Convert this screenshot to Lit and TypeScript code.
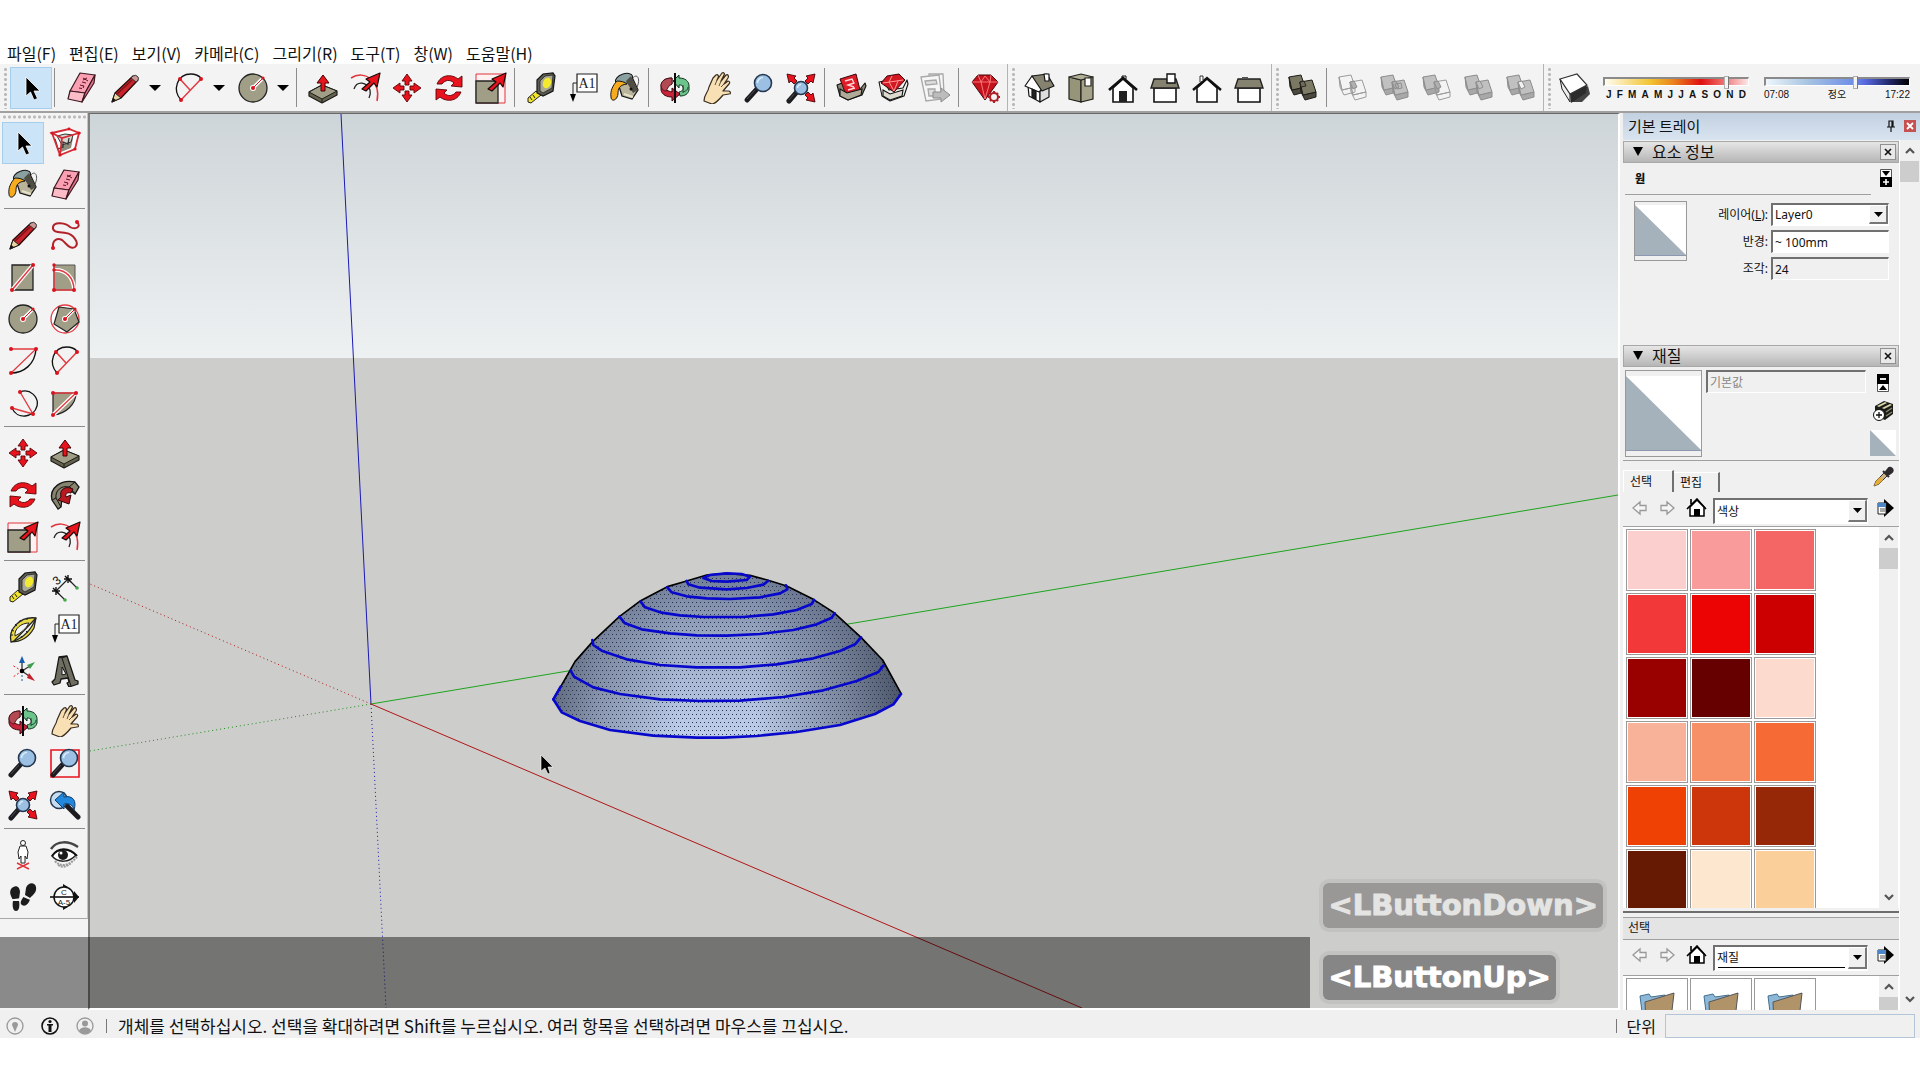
import { LitElement, html, css, svg, nothing } from "lit";
import { customElement, property } from "lit/decorators.js";
import { classMap } from "lit/directives/class-map.js";

const RED = "#e8131d";
const OLIVE = "#a09e87";

const dot = (x: number, y: number, r = 2) => svg`<circle cx=${x} cy=${y} r=${r} fill="#d8141f"/>`;

const solid = (x: number, y: number, face: string, side: string, line: string) => svg`
  <g stroke=${line} stroke-width="1" stroke-linejoin="round">
    <path fill=${side} d="M${x} ${y + 2}l3 13 13-3v5L${x + 5} ${y + 20}l-4-8z"/>
    <path fill=${face} d="M${x} ${y + 2}l12-2 4 12-13 3z"/>
  </g>`;

const solids = (mode: string) => {
  if (mode === "shell")
    return svg`${solid(2, 3, "#7a7763", "#4c4a3e", "#1d1c18")}${solid(13, 8, "#7d7a66", "#4c4a3e", "#1d1c18")}
      <path d="M13 10l4-1 2 5-5 1z" fill="#6d6a58" stroke="#1d1c18" stroke-width=".8"/>`;
  const on = ["#c0c0c0", "#a8a8a8", "#8d8d8d"];
  const off = ["none", "none", "#9c9c9c"];
  const first = mode === "intersect" ? off : on;
  const second = mode === "intersect" || mode === "subtract" ? off : on;
  const mid = mode === "split" ? "#f3f3f3" : mode === "trim" ? "#c0c0c0" : "#b0b0b0";
  return svg`${solid(2, 3, first[0], first[1], first[2])}${solid(13, 8, second[0], second[1], second[2])}
    <path d="M13 10l4-1 3 6-4 2z" fill=${mid} stroke="#8d8d8d"/>
    ${mode === "union" ? svg`<path d="M16 12l6-1 1 5-5 1z" fill="none" stroke="#8d8d8d"/>` : nothing}`;
};

const lens = (x: number, y: number, r: number, hx: number, hy: number) => {
  const k = 0.72 * r;
  return svg`
    <path d="M${x - k} ${y + k}L${hx} ${hy}" stroke="#1c1c20" stroke-width="5" stroke-linecap="round"/>
    <path d="M${x - k - 2} ${y + k + 1}L${hx} ${hy - 1}" stroke="#4a4a52" stroke-width="1"/>
    <circle cx=${x} cy=${y} r=${r} fill="#9cc0e4" stroke="#24374e" stroke-width="1.6"/>
    <path d="M${x - r + 3} ${y}a${r - 3} ${r - 3} 0 0 1 ${r - 3} ${-r + 3}" fill="none" stroke="#d9eafa" stroke-width="1.6"/>`;
};

const fatArrow = svg`<path d="M13 17l8-7-4-3 14-6-3 14-3-4-8 8z" fill=${RED} stroke="#1a0a0a" stroke-width="1.2" stroke-linejoin="round"/>`;

const icons: Record<string, unknown> = {
  select: svg`<path d="M11 5v19l4.500-4 3.500 8 3.500-1.500-3.500-7.500h6z" fill="#000" stroke="#fff" stroke-width=".8"/>`,
  eraser: svg`<g stroke="#3b1720" stroke-width="1.200" stroke-linejoin="round">
    <path fill="#fb9fb2" d="M15 1l15 2-10 18-15-2z"/><path fill="#fbbcc8" d="M5 19l15 2-3 9-14-3z"/>
    <path fill="#e0768b" d="M30 3l-1 8-12 19 3-9z"/></g>
    <path d="M14 16l3 .5M15 13l4 1-1 2M17 10l4 1M18 8l4-2M18 6l5 3" stroke="#5a1526" fill="none"/>`,
  pencil: svg`<path d="M3 30l3-9L24 4l5 4-17 18z" fill="#c8232b" stroke="#2a0a0a" stroke-width="1.300" stroke-linejoin="round"/>
    <path d="M3 30l3-9 6 5z" fill="#e8d6a0" stroke="#222"/><path d="M3 30l1-4 3 2z" fill="#111"/>
    <path d="M22 6l2-2q3-2 5 1 1 1 0 3l-2 2z" fill="#c99a96" stroke="#333"/><path d="M8 22L23 8" stroke="#7c1118" stroke-width="1.500"/>`,
  arc2: svg`<path d="M8 28C-1 18 4 2 18 2q6 0 10 4" fill="none" stroke="#111" stroke-width="1.300"/>
    <path d="M8 28L28 7M7 7l10 11" stroke="#e23b42" stroke-width="1.500"/>${dot(8, 28)}${dot(28, 7)}${dot(7, 7)}`,
  circle: svg`<circle cx="16" cy="16" r="14" fill=${OLIVE} stroke="#222" stroke-width="1.300"/>
    <path d="M16 16L25 7" stroke="#fff" stroke-width="3.500"/><circle cx="16" cy="16" r="3" fill="#fff"/>
    <path d="M16 16L25 7" stroke="#d8141f"/>${dot(16, 16, 2)}${dot(26, 6, 1.6)}`,
  pushpull: svg`<path d="M2 20l13-7 15 6v4L15 31 2 24z" fill="#65634f" stroke="#1c1c17" stroke-width="1.200" stroke-linejoin="round"/>
    <path d="M2 20l13-7 15 6-15 8z" fill=${OLIVE} stroke="#1c1c17"/><path d="M15 27v4" stroke="#1c1c17"/>
    <path d="M14 19v-8h-4l6-8 6 8h-4v8z" fill=${RED} stroke="#400" stroke-linejoin="round"/>`,
  offset: svg`<path d="M2 6C16-3 32 10 28 29" fill="none" stroke="#e0343c" stroke-width="1.500"/>
    <path d="M5 17C8 8 18 10 21 18q1 4-1 8" fill="none" stroke="#222" stroke-width="1.300"/>${fatArrow}`,
  move: svg`<g fill=${RED} stroke="#5a0508" stroke-width=".9" stroke-linejoin="round">
    <path d="M16 2l5 7h-3v4h-4V9h-3zM16 30l5-7h-3v-4h-4v4h-3zM2 16l7-5v3h4v4H9v3zM30 16l-7-5v3h-4v4h4v3z"/></g>`,
  rotate: svg`<g fill=${RED} stroke="#5a0508" stroke-linejoin="round" stroke-width=".9">
    <path d="M4 12C8 2 19 2 25 7l4-3v11l-11-1 3-3c-4-4-9-3-12 1z"/>
    <path d="M28 20c-4 10-15 10-21 5l-4 3V17l11 1-3 3c4 4 9 3 12-1z"/></g>`,
  scale: svg`<path d="M1 2h29v29H1z" fill="#fdf1f1" stroke="#e0343c"/><path d="M1 9h22v22H1z" fill=${OLIVE} stroke="#222" stroke-width="1.300"/>${fatArrow}`,
  tape: svg`<path d="M11 19L3 26v4l3 1 10-8z" fill="#f1e22a" stroke="#222"/><path d="M5 25l2 3M8 23l2 3" stroke="#222"/>
    <path d="M12 8l6-6 10-1 2 3-2 15-10 5-6-3z" fill="#5d5c53" stroke="#151515" stroke-width="1.200"/>
    <path d="M15 9l5-5 8-1-1 13-9 5-3-2z" fill="#aaa897" stroke="#222" stroke-width=".8"/>
    <ellipse cx="22" cy="11" rx="4" ry="5.500" fill="#f4ea2d" transform="rotate(20 22 11)"/>`,
  text: svg`<path d="M10 2h20v18H10z" fill="#fff" stroke="#222" stroke-width="1.200"/>
    <text x="20" y="16" font-family="Liberation Serif, serif" font-size="14" text-anchor="middle" fill="#222">A1</text>
    <path d="M10 11H6v12" fill="none" stroke="#222"/><path d="M3 22h6l-3 8z" fill="#000"/>`,
  paint: svg`<path d="M23 7c5-7 9 0 5 8" fill="none" stroke="#555"/>
    <path d="M8 8l14-5 7 15-6 9-10-3z" fill="#b9b49b" stroke="#161616" stroke-width="1.300"/>
    <ellipse cx="15" cy="7" rx="9" ry="5" transform="rotate(-20 15 7)" fill="#8ba0a0" stroke="#161616"/>
    <path d="M22 4l7 14-5 3-7-12z" fill="#4f4d44"/><path d="M15 22l9 3" stroke="#e5e0c8" stroke-width="2" fill="none"/>
    <circle cx="22" cy="17" r="1.500" fill="#111"/>
    <path d="M8 9c4 0 8 1 10 3-8 1-9 5-9 10-1 7-7 8-7 3C1 19 4 13 8 9z" fill="#f6ab1e" stroke="#161616"/>`,
  orbit: svg`<path d="M14 9l6-6v3c6 0 10 3 10 8v4c-1 4-4 6-9 6l-1-4c4-1 5-3 4-5s-2-2-4-2v3z" fill="#6cc48c" stroke="#12311f" stroke-linejoin="round"/>
    <path d="M24 13v8M29 15c0 3-2 4-5 5" stroke="#12311f" fill="none" stroke-width=".8"/>
    <path d="M13 6C6 6 2 9 2 14v4c1 5 6 7 11 7v4l8-7-8-6v4c-4-1-7-2-7-4s3-4 7-4z" fill="#c9253a" stroke="#3c0810" stroke-linejoin="round"/>
    <path d="M13 6C6 6 2 9 2 14c1 4 3 5 5 5l3-5 3-2z" fill="#b14a52" stroke="#3c0810" stroke-width=".8"/>
    <path d="M16 1v30" stroke="#0c0c0c" stroke-width="2"/>`,
  pan: svg`<path d="M3 29c0-7 4-8 5-14L12 6l3-3c2-1 3 1 2 3l-1 2 5-7c2-1 3 1 2 2l-3 6 5-6c2-1 3 1 2 3l-4 6 4-3c2 0 2 2 1 3l-6 7h6c2 1 2 3 0 3l-6 1c-5 6-8 9-11 9z" fill="#f8dfb4" stroke="#372c1e" stroke-width="1.200" stroke-linejoin="round"/>
    <path d="M16 8l-2 5M20 9l-2 5M23 12l-3 3" stroke="#372c1e" stroke-width=".8"/>`,
  zoom: svg`${lens(20, 11, 8.5, 4, 28)}`,
  extents: svg`${lens(16, 16, 6.5, 4, 29)}<g fill=${RED} stroke="#44060a" stroke-width=".9">
    <path d="M2 2l9 2-2 2 3 3-3 3-3-3-2 2zM30 2l-9 2 2 2-3 3 3 3 3-3 2 2zM30 30l-9-2 2-2-3-3 3-3 3 3 2-2z"/></g>`,
  zoomwin: svg`<path d="M2 3h28v27H2z" fill="none" stroke=${RED} stroke-width="1.600"/>${lens(20, 11, 8.5, 4, 28)}`,
  previous: svg`<path d="M17 16l12 12" stroke="#1c1c20" stroke-width="5" stroke-linecap="round"/>
    <circle cx="10" cy="11" r="8.500" fill="#c5dcf0" stroke="#24374e" stroke-width="1.400"/>
    <path d="M6 11l9-8v5c9-2 13 4 10 13-1-5-5-7-10-6v5z" fill="#2188dd" stroke="#0b3c70"/>`,
  warehouse: svg`<path d="M2 13l5-2 4 7 15-2 4-5 1 3-4 9-14 5-8-4z" fill="#8b8778" stroke="#121212" stroke-width="1.100" stroke-linejoin="round"/>
    <path d="M5 7l16-5 4 16-14 5z" fill="#df1b27" stroke="#3b060a"/>
    <path d="M10 9l7-2 2 4-6 2 6 2M13 18l7-2" stroke="#ffd7d7" stroke-width="1.400" fill="none"/>
    <path d="M5 17l7 4 15-4-1 6-13 5-8-4z" fill="#b0ab99" stroke="#121212" stroke-width="1.100"/>`,
  extension: svg`<path d="M2 10l5-1 5 9 14-2 4-8 1 4-4 12-14 5-8-5z" fill="#f0f0ec" stroke="#121212" stroke-width="1.100" stroke-linejoin="round"/>
    <path d="M10 4l12-2 6 6-11 12L4 11z" fill="#d31822" stroke="#3b060a"/>
    <path d="M6 11l20-3M12 10l5 9 4-10M12 10l3-6" stroke="#ff9a9a" fill="none"/>
    <path d="M6 18l7 4 13-4-1 6-12 4-7-4z" fill="#dddad0" stroke="#121212" stroke-width="1.100"/>`,
  layout: svg`<g fill="#f6f6f6" stroke="#a8a8a8" stroke-width="1.300"><path d="M10 2h14l1 20H10z"/><path d="M2 5l18-2 3 24-16 2z"/>
    <path d="M6 9l11-1 1 4-11 1zM9 17h7v7h-6z" fill="#ddd"/></g>
    <path d="M14 20h8v-4l9 7-9 7v-4h-8z" fill="#bcbcbc" stroke="#8b8b8b"/>`,
  ruby: svg`<path d="M3 10l6-7h13l7 7-13 18z" fill="#c5131d" stroke="#480509"/>
    <path d="M3 10h26M9 3l3 7 4 17 5-17 1-7M12 10l4-6 5 6" stroke="#ff8082" fill="none" stroke-width=".9"/>
    <circle cx="25" cy="25" r="4" fill="#f3f3f3" stroke="#b02028" stroke-width="2"/>
    <path d="M25 19v2M25 29v2M19 25h2M29 25h2M21 21l1 1M28 28l1 1M29 21l-1 1M21 29l1-1" stroke="#b02028" stroke-width="2"/>`,
  iso: svg`<g stroke="#151515" stroke-width="1.200" stroke-linejoin="round"><path d="M5 14l12 4v12L6 24z" fill="#fff"/><path d="M17 18l9-5v12l-9 5z" fill="#ddd"/>
    <path d="M2 14l7-10 4 2 6 11-3 3z" fill="#fff"/><path d="M9 4l15-2 7 12-12 5z" fill="#85836f"/><path d="M21 2h5v7h-4z" fill="#fff"/><path d="M9 17l4 2v8l-4-2z" fill="#222"/></g>`,
  top: svg`<g stroke="#22221d" stroke-width="1.200"><path d="M4 5l12 3v22L4 27z" fill="#969479"/><path d="M16 8l12-3v22l-12 3z" fill="#a5a38a"/>
    <path d="M4 5l12-3 12 3-12 3z" fill="#b1af98"/><path d="M20 6h6v8h-6z" fill="#fff"/></g>`,
  front: svg`<path d="M6 16L16 7l10 9v14H6z" fill="#fff" stroke="#111" stroke-width="1.600"/><path d="M2 18L16 6l14 12" fill="none" stroke="#111" stroke-width="2.600"/>
    <path d="M12 19h8v11h-8z" fill="#222"/><path d="M15 6V4h4v3" fill="none" stroke="#111"/>`,
  right: svg`<path d="M5 16h22v14H5z" fill="#fff" stroke="#111" stroke-width="1.600"/><path d="M5 7h22l3 9H2z" fill="#85836f" stroke="#222" stroke-width="1.400"/>
    <path d="M18 2h8v9h-8z" fill="#fff" stroke="#111" stroke-width="1.400"/>`,
  back: svg`<path d="M6 16L16 7l10 9v14H6z" fill="#fff" stroke="#111" stroke-width="1.600"/><path d="M2 18L16 6l14 12" fill="none" stroke="#111" stroke-width="2.400"/>
    <path d="M9 10V4h3v4" fill="#fff" stroke="#333"/>`,
  left: svg`<path d="M5 16h22v14H5z" fill="#fff" stroke="#111" stroke-width="1.600"/><path d="M5 7h22l3 9H2z" fill="#85836f" stroke="#222" stroke-width="1.400"/>
    <path d="M9 5h6v2H9z" fill="#555"/>`,
  shell: solids("shell"),
  intersect: solids("intersect"),
  union: solids("union"),
  subtract: solids("subtract"),
  trim: solids("trim"),
  split: solids("split"),
  shadow: svg`<path d="M15 22l14-8 2 8-8 8H12z" fill="#444"/><path d="M1 7l10 14v9L3 17z" fill="#eee" stroke="#222"/>
    <path d="M11 21l17-8-1 8-15 10z" fill="#2c2c2c"/><path d="M1 7l17-5 10 11-17 9z" fill="#fff" stroke="#333" stroke-width="1.200"/>`,
  component: svg`<path d="M3 6l17-4 10 4-4 17-15 6z" fill="#fff"/><path d="M12 14l12-3-2 10-10 4z" fill="#8d8b7a"/><path d="M8 9l8-2 8 1-2 7-9 3z" fill="#d6d6d0" stroke="#333"/>
    <path d="M6 12l3 10 5-2v-5l5 2 1-6" fill="none" stroke="#333" stroke-width="1.300"/>
    <g fill="none" stroke="#d42d38" stroke-width="1.800"><path d="M3 6l17-4 10 4-17 5zM3 6l8 22 15-6 4-16M13 11l-2 17"/></g>
    ${dot(3, 6, 1.6)}${dot(20, 2, 1.4)}${dot(30, 6, 1.6)}${dot(11, 28, 1.6)}${dot(26, 22, 1.6)}`,
  freehand: svg`<path d="M4 29c-1-9 5-10 9-8 5 4 8 10 13 7 5-4-2-13-9-14-6-1-14 0-13-6S17 4 21 8c5 3 12 0 7-5" fill="none" stroke="#b2222b" stroke-width="2"/>${dot(4, 29)}${dot(28, 3)}`,
  rect: svg`<path d="M5 4h21v25H5z" fill=${OLIVE} stroke="#222" stroke-width="1.300"/><path d="M5 29L26 4" stroke="#fff" stroke-width="4"/>
    <path d="M5 29L26 4" stroke="#e23b42" stroke-width="1.500"/>${dot(5, 29)}${dot(26, 4)}`,
  rotrect: svg`<path d="M5 4h21v25H5z" fill=${OLIVE} stroke="#555"/><path d="M5 9c12-1 20 8 20 20" fill="none" stroke="#fff" stroke-width="4"/>
    <path d="M5 4v25h20M5 9c12-1 20 8 20 20" fill="none" stroke="#e23b42" stroke-width="1.500"/>${dot(5, 4, 1.7)}${dot(5, 9, 1.7)}${dot(5, 29)}${dot(25, 29)}`,
  polygon: svg`<circle cx="16" cy="16" r="14" fill="#fff" stroke="#e23b42" stroke-width="1.300"/>
    <path d="M10 4l15 2 5 13-12 10-13-8z" fill=${OLIVE} stroke="#222" stroke-width="1.200"/><path d="M16 16l9-9" stroke="#fff" stroke-width="3"/>
    <circle cx="16" cy="16" r="3" fill="#fff"/><path d="M16 16l9-9" stroke="#d8141f"/>${dot(16, 16, 2)}${dot(26, 6, 1.6)}`,
  arc: svg`<path d="M4 28C17 28 28 19 29 4" fill="none" stroke="#111" stroke-width="1.400"/><path d="M4 4h25L4 28" fill="none" stroke="#e23b42" stroke-width="1.300"/>${dot(4, 4)}${dot(29, 4)}${dot(4, 28)}`,
  arc3: svg`<path d="M13 5c10-4 19 5 17 14-3 12-20 14-25 2" fill="none" stroke="#111" stroke-width="1.300"/>
    <path d="M13 5l13 22L5 21" fill="none" stroke="#e23b42" stroke-width="1.400"/>${dot(13, 5)}${dot(5, 21)}${dot(26, 27)}`,
  pie: svg`<path d="M4 6h23c0 11-10 21-23 22z" fill=${OLIVE} stroke="#222" stroke-width="1.200"/><path d="M27 6L4 28" stroke="#fff" stroke-width="4"/>
    <path d="M4 6h23L4 28" fill="none" stroke="#e23b42" stroke-width="1.400"/>${dot(4, 6)}${dot(27, 6)}${dot(4, 28)}`,
  follow: svg`<path d="M9 30l-6-9C0 9 12 0 26 3l4 5-4 7-5-4c-7-2-9 2-8 8l-1 9z" fill="#86846f" stroke="#151515" stroke-width="1.300"/>
    <path d="M3 21l4-2 5 9M7 19C6 12 12 6 20 8l6-5M21 8l5 7" fill="none" stroke="#151515"/>
    <path d="M12 18c-2-7 4-12 12-8l-2 4c-4-1-6 1-5 4l5-2-2 9-11-4z" fill="#b81820" stroke="#32060a"/>`,
  dimension: svg`<path d="M7 20L19 8M7 20l9 9M19 8l9 9" stroke="#222" stroke-width="1.200"/><path d="M3 20h8M7 16v8M15 8h8M19 4v8M4 17l6 6M16 5l6 6" stroke="#111" stroke-width="1.400"/>
    <text x="5" y="13" font-family="Liberation Sans, sans-serif" font-size="12" transform="rotate(-40 9 10)" fill="#111">3</text>
    <circle cx="16" cy="29" r="1.800" fill="#45a84a"/><circle cx="28" cy="17" r="1.800" fill="#45a84a"/>`,
  protractor: svg`<path d="M4 29C1 16 13 3 29 5L7 28z" fill="#e9da45" stroke="#222" stroke-width="1.300" stroke-linejoin="round"/>
    <path d="M4 29l3-1C18 24 25 15 29 5l-2 10C22 24 14 29 4 29z" fill="#e9da45" stroke="#222" stroke-width="1.200"/>
    <path d="M8 23c-1-7 6-13 14-13-3 6-8 10-14 13z" fill="#f3f3f3" stroke="#222"/><path d="M4 22l2 0M4 17l3 1M8 11l2 2M13 7l1 2M20 5v2M15 25l-1-2M21 20l-2-2" stroke="#222"/>`,
  axes: svg`<path d="M15 16L5 10M15 16L6 22" stroke="#d22" stroke-dasharray="2 2"/><path d="M15 16v12" stroke="#2255a0" stroke-dasharray="2 2"/>
    <path d="M15 16V7M15 16l8-5M15 16l7 5" stroke="#333" stroke-width="1.300"/><path d="M12 8l3-7 3 7z" fill="#1a5fae"/><path d="M20 10l8-3-5 7z" fill="#3f9d4d"/>
    <path d="M22 18l6 8-8-3z" fill="#c2202a"/><circle cx="15" cy="16" r="2.300" fill="#000"/>`,
  text3d: svg`<path d="M10 2l8-1 8 24 3 1v3l-9 3-2-4 2-1-1-4-7 1-1 4-6 2-2-3 3-3z" fill="#6f6e60" stroke="#161616" stroke-width="1.300" stroke-linejoin="round"/>
    <path d="M13 12l4 7-4 1z" fill="#f3f3f3" stroke="#161616"/><path d="M10 2l3 1 9 28M13 3l5-2" stroke="#161616" fill="none"/>`,
  position: svg`<circle cx="16" cy="4" r="2.500" fill="#fff" stroke="#222"/><path d="M13 7h6l2 6-1 7-2-3v7h-4v-7l-2 3-1-7z" fill="#fff" stroke="#222"/>
    <path d="M10 30l12-6M10 24l12 6" stroke="#e0343c" stroke-width="1.500"/>`,
  look: svg`<path d="M2 10C8 1 20 2 29 8" stroke="#444" stroke-width="2.500" fill="none"/><path d="M3 17c6-8 16-8 24-1-7 8-18 8-24 1z" fill="#fff" stroke="#222" stroke-width="1.500"/>
    <path d="M3 17c6-9 17-9 25 0" stroke="#111" stroke-width="2" fill="none"/>
    <circle cx="14" cy="16" r="5" fill="#1b1b1b"/><circle cx="12" cy="14" r="1.500" fill="#fff"/>
    <path d="M6 22c5 6 13 6 22-4M9 26c5 3 9 2 14-3" fill="none" stroke="#999" stroke-width="2" stroke-dasharray="2 1"/>`,
  walk: svg`<g fill="#1c1c1c"><path d="M4 8c4-5 9-3 9 3l-1 7-6 1c-2-4-4-7-2-11zM6 20h6c1 5 0 10-3 10s-4-5-3-10z"/><path d="M19 7c2-6 9-6 10-1s-3 8-6 11l-5-3zM17 15l6 3c-1 5-5 8-8 6s0-6 2-9z"/></g>
    <path d="M5 19l8-1M16 15l7 3" stroke="#f3f3f3" stroke-width="1.600"/>`,
  section: svg`<circle cx="15" cy="16" r="10" fill="#fff" stroke="#111" stroke-width="1.500"/><path d="M14 3l5 3h-5zM14 29l5-3h-5zM25 10l5 6-5 6z" fill="#111"/><path d="M1 16h29" stroke="#111" stroke-width="1.600"/>
    <g font-family="Liberation Sans, sans-serif" font-size="8" text-anchor="middle" fill="#222"><text x="15" y="14">C</text><text x="15" y="24">A-5</text></g>`,
  home: svg`<path d="M4 9l7-7 7 7v9H4z" fill="#fff" stroke="#000" stroke-width="1.500"/><path d="M1 11L11 1l9 10M5 6V1" stroke="#000" stroke-width="1.600" fill="none"/><path d="M8 11h6v7H8z" fill="#000"/>`,
};

const icon = (name: string) => html`<svg class="ico" viewBox="0 0 32 32" fill="none" aria-hidden="true">${icons[name]}</svg>`;

const toolStyles = css`
  button { border: 0; padding: 0; margin: 0; background: none; font: inherit; color: inherit; }
  .tool { width: 42px; height: 42px; flex: none; display: grid; place-items: center; border: 1px solid transparent; }
  .tool.active { background: #cce4f7; border-color: #a5cdec; }
  .ico { width: 32px; height: 32px; display: block; }
`;

const tool = (name: string, label: string, active = false) =>
  html`<button class=${classMap({ tool: true, active })} aria-label=${label} title=${label}>${icon(name)}</button>`;

@customElement("top-toolbar")
class TopToolbar extends LitElement {
  static styles = [toolStyles, css`
    :host { display: flex; height: 49px; background: #f3f3f3; border-bottom: 2px solid #a0a0a0; align-items: center; box-sizing: border-box; font-family: "Liberation Sans", "Noto Sans CJK KR", sans-serif; }
    .group { display: flex; align-items: center; align-self: stretch; border-right: 1px solid #b4b4b4; padding-right: 1px; }
    .group.last { border: 0; flex: 1; }
    .grip { width: 10px; height: 42px; flex: none; background: radial-gradient(circle, #b8b8b8 1px, transparent 2px) 4px 0 / 3px 5px repeat-y; }
    .sep { width: 1px; height: 39px; margin: 0 5px 0 2px; background: #8c8c8c; flex: none; }
    .split { display: flex; align-items: center; padding: 0 2px; }
    .drop { width: 18px; height: 42px; display: grid; place-items: center; }
    .drop svg { width: 12px; height: 6px; }
    .slider { width: 146px; margin: 1px 0 0 7px; color: #111; font-size: 10px; font-weight: 700; line-height: 14px; }
    .slider + .slider { margin-left: 15px; }
    .ticks { display: flex; justify-content: space-between; padding: 0 3px; }
    .times { padding: 0; font-weight: 400; }
    input { appearance: none; display: block; width: 100%; height: 14px; margin: 0; background: none; }
    input::-webkit-slider-runnable-track { height: 9px; border: 1px solid #fff; border-top: 2px solid #8a8a8a; border-left: 2px solid #8a8a8a; background: linear-gradient(90deg, #fffdf0, #f2c230 32%, #e9811e 48%, #e01010 67%, #ee6a6a 82%, #fde6e6); }
    .day::-webkit-slider-runnable-track { background: linear-gradient(90deg, #eef6fc, #a9c6e2 28%, #7190e6 60%, #5566dd 70%, #23286a 86%, #000); }
    input::-webkit-slider-thumb { appearance: none; width: 5px; height: 13px; margin-top: -3px; background: #f4f4f4; border: 1px solid #b0b0b0; border-right-color: #777; box-sizing: border-box; }
  `];
  render() {
    const sep = html`<span class="sep"></span>`;
    const grip = html`<span class="grip"></span>`;
    const split = (n: string, l: string) => html`<span class="split">${tool(n, l)}<button class="drop" aria-label="${l} 옵션"><svg viewBox="0 0 12 6"><path d="M0 0h12L6 6z"/></svg></button></span>`;
    return html`
      <div class="group">${grip}${tool("select", "선택", true)}${sep}${tool("eraser", "지우기")}
        ${split("pencil", "선")}${split("arc2", "호")}${split("circle", "원")}${sep}
        ${tool("pushpull", "밀기/끌기")}${tool("offset", "오프셋")}${tool("move", "이동")}${tool("rotate", "회전")}${tool("scale", "배율")}${sep}
        ${tool("tape", "줄자")}${tool("text", "텍스트")}${tool("paint", "페인트통")}${sep}
        ${tool("orbit", "궤도")}${tool("pan", "이동 보기")}${tool("zoom", "확대/축소")}${tool("extents", "범위 확대/축소")}${sep}
        ${tool("warehouse", "3D Warehouse")}${tool("extension", "Extension Warehouse")}${tool("layout", "LayOut")}${sep}${tool("ruby", "확장 관리자")}</div>
      <div class="group">${grip}${tool("iso", "등각")}${tool("top", "상단")}${tool("front", "전면")}${tool("right", "오른쪽")}${tool("back", "후면")}${tool("left", "왼쪽")}</div>
      <div class="group">${grip}${tool("shell", "외부 셸")}${sep}${tool("intersect", "교차")}${tool("union", "결합")}${tool("subtract", "빼기")}${tool("trim", "트리밍")}${tool("split", "분할")}</div>
      <div class="group last">${grip}${tool("shadow", "그림자")}
        <div class="slider"><input type="range" min="0" max="100" value="86" aria-label="날짜">
          <div class="ticks">${[..."JFMAMJJASOND"].map((m) => html`<span>${m}</span>`)}</div></div>
        <div class="slider"><input class="day" type="range" min="0" max="100" value="63" aria-label="시간">
          <div class="ticks times"><span>07:08</span><span>정오</span><span>17:22</span></div></div>
      </div>`;
  }
}

@customElement("side-toolbar")
class SideToolbar extends LitElement {
  static styles = [toolStyles, css`
    :host { display: block; width: 88px; flex: none; background: #f3f3f3; }
    .palette { border-bottom: 1px solid #a8a8a8; border-right: 1px solid #c4c4c4; padding: 0 1px 0 2px; }
    .grip { height: 9px; background: radial-gradient(circle, #b8b8b8 1px, transparent 2px) 0 2px / 5px 4px repeat-x; }
    .grid { display: grid; grid-template-columns: 42px 42px; }
    .sep { height: 1px; background: #8c8c8c; margin: 2px 1px 5px 2px; }
  `];
  render() {
    const groups = [
      ["select", "component", "paint", "eraser"],
      ["pencil", "freehand", "rect", "rotrect", "circle", "polygon", "arc", "arc2", "arc3", "pie"],
      ["move", "pushpull", "rotate", "follow", "scale", "offset"],
      ["tape", "dimension", "protractor", "text", "axes", "text3d"],
      ["orbit", "pan", "zoom", "zoomwin", "extents", "previous"],
      ["position", "look", "walk", "section"],
    ];
    return html`<div class="palette"><div class="grip"></div>
      ${groups.map((g, i) => html`${i ? html`<div class="sep"></div>` : nothing}<div class="grid">${g.map((n) => tool(n, n, n === "select"))}</div>`)}</div>`;
  }
}

const RINGS = [
  "122,362 132,380 190,412 270,432 390,448 510,453 630,452 760,441 880,421 980,393 1045,366 1060,347",
  "187,270 190,285 215,302 290,328 390,345 500,352 630,352 740,343 850,325 930,303 975,283 993,262",
  "268,200 285,220 335,238 420,250 500,256 590,257 690,252 790,240 860,223 905,203 914,190",
  "332,155 345,172 395,188 450,196 520,201 640,201 730,193 800,180 845,162 852,150",
  "412,112 425,127 470,139 530,145 600,147 690,142 750,130 772,118 768,106",
  "470,93 475,103 510,113 590,118 650,114 700,104 714,93",
  "520,84 540,75 590,70 635,72 660,80 650,90 590,95 545,93 520,84",
];
const OUTLINE = "70,448 118,365 135,335 188,275 268,200 332,152 412,110 470,93 530,75 590,70 660,76 712,90 770,108 850,148 912,188 993,262 1058,330 1113,430";
const BASE = "1113,432 1090,463 1035,492 930,525 800,546 680,558 580,563 500,563 370,557 240,540 150,513 95,487 70,448";

@customElement("model-view")
class ModelView extends LitElement {
  static styles = css`
    :host { display: block; position: relative; flex: 1; min-width: 0; overflow: hidden; border: 1px solid #696969; border-width: 1px 0 0 1px; border-left: 2px solid #808080; border-right: 2px solid #fff; border-bottom: 2px solid #fff; background: #cdcdcb; }
    svg { display: block; width: 100%; height: 100%; }
    .keys { position: absolute; right: 15px; bottom: 8px; display: flex; flex-direction: column; align-items: flex-start; gap: 27px; }
    .key { font: 700 29px/45px "DejaVu Sans", sans-serif; -webkit-text-stroke: 1px currentColor; padding: 0 5px; border-radius: 6px; background: #868686; color: #fff; box-shadow: 0 0 0 4px rgba(0, 0, 0, 0.05); white-space: nowrap; }
    .key.faded { background: #999897; color: #e4e4e3; }
  `;
  render() {
    return html`
      <svg viewBox="90 114 1528 894" preserveAspectRatio="xMidYMid slice" role="img" aria-label="모델">
        <defs>
          <linearGradient id="sky" x2="0" y2="1"><stop stop-color="#ced5d8"/><stop offset="1" stop-color="#eef1f2"/></linearGradient>
          <linearGradient id="lit" x2="0" y2="1"><stop stop-color="#707d98"/><stop offset=".4" stop-color="#9aa9c4"/><stop offset="1" stop-color="#bfd0ec"/></linearGradient>
          <linearGradient id="edge"><stop stop-color="#2c3342" stop-opacity=".6"/><stop offset=".13" stop-color="#2c3342" stop-opacity=".32"/><stop offset=".36" stop-color="#2c3342" stop-opacity="0"/><stop offset=".58" stop-color="#2c3342" stop-opacity="0"/><stop offset=".84" stop-color="#2c3342" stop-opacity=".42"/><stop offset="1" stop-color="#2c3342" stop-opacity=".75"/></linearGradient>
          <pattern id="dots" width="12" height="24" patternUnits="userSpaceOnUse"><path d="M0 0h3v3H0zM6 12h3v3H6z" fill="#27304f"/></pattern>
        </defs>
        <path d="M90 114h1528v244H90z" fill="url(#sky)"/>
        <g stroke-width="1" fill="none">
          <path d="M341 114l30 590" stroke="#1a1ab4"/>
          <path d="M371 704l15 304" stroke="#1a1ab4" stroke-dasharray="1 3"/>
          <path d="M371 704l1247-209" stroke="#1da51d"/>
          <path d="M371 704L90 751" stroke="#1d8f1d" stroke-dasharray="1 3"/>
          <path d="M371 704l711 304" stroke="#b01616"/>
          <path d="M371 704L90 584" stroke="#b01616" stroke-dasharray="1 3"/>
        </g>
        <g transform="translate(530 550) scale(.33333)" stroke-linejoin="round" stroke-linecap="round" fill="none">
          <polygon points="${OUTLINE} ${BASE}" fill="url(#lit)"/>
          <polygon points="${OUTLINE} ${BASE}" fill="url(#edge)"/>
          <polygon points="${OUTLINE} ${BASE}" fill="url(#dots)"/>
          <polyline points=${OUTLINE} stroke="#000" stroke-width="5"/>
          <g stroke="#0808cc" stroke-width="8">
            <polyline points=${BASE}/>
            ${RINGS.map((p) => svg`<polyline points=${p}/>`)}
            <polyline points="70,448 92,410"/>
          </g>
        </g>
        <path d="M541 755v16l4-3 3 6 2-1-2-6h5z" fill="#000" stroke="#fff" stroke-width=".6"/>
      </svg>
      <div class="keys"><div class="key faded">&lt;LButtonDown&gt;</div><div class="key">&lt;LButtonUp&gt;</div></div>`;
  }
}

const SWATCHES = ["#fbcfce", "#f99b9b", "#f46665", "#f23838", "#ec0404", "#cc0000", "#990000", "#660000", "#fcdacd", "#f8b299", "#f79067", "#f66a35", "#f04104", "#cd350b", "#962807", "#661a04", "#fde7cf", "#fbcf9a"];

@customElement("side-tray")
class SideTray extends LitElement {
  static styles = css`
    :host { width: 297px; margin-left: 3px; flex: none; display: flex; flex-direction: column; min-height: 0; background: #f0f0f0; color: #111; font: 12px/16px "Noto Sans", "Noto Sans CJK KR", sans-serif; }
    button { border: 0; padding: 0; margin: 0; background: none; font: inherit; color: inherit; }
    svg { display: block; flex: none; }
    .title { display: flex; align-items: center; height: 27px; box-sizing: border-box; flex: none; padding: 0 4px 2px 5px; background: linear-gradient(#c3d0e0, #d8e4f0); font: 15px/20px "Noto Sans CJK KR", sans-serif; }
    .title span { flex: 1; }
    .title button { display: grid; place-items: center; }
    .title .close { width: 12px; height: 12px; margin-left: 9px; background: #c75050; }
    .body { flex: 1; min-height: 0; display: flex; padding-right: 1px; }
    .panels { flex: 1; min-width: 0; display: flex; flex-direction: column; padding-top: 1px; border-right: 1px solid #fff; }
    .head { display: flex; align-items: center; height: 22px; flex: none; box-sizing: border-box; border: 1px solid #a8a8a8; background: linear-gradient(#e6e6e6, #b6b6b6); padding: 0 2px 2px 9px; font: 16px/18px "Noto Sans CJK KR", sans-serif; }
    .head span { flex: 1; margin-left: 9px; }
    .x { width: 16px; height: 16px; margin-top: 2px; box-sizing: border-box; border: 1px solid #909090; background: #e8e8e8; display: grid; place-items: center; }
    .scroll { width: 19px; flex: none; display: flex; flex-direction: column; align-items: center; background: #f0f0f0; }
    .scroll button { width: 19px; height: 21px; display: grid; place-items: center; flex: none; }
    .thumb { width: 19px; height: 21px; background: #cdcdcd; margin-bottom: auto; flex: none; }
    .info { height: 182px; flex: none; box-sizing: border-box; padding: 6px 7px 0 2px; }
    .kind { display: flex; justify-content: space-between; padding: 0 0 0 10px; height: 25px; font-weight: 700; align-items: flex-start; }
    .kind b { font-size: 11px; line-height: 20px; }
    .rule { height: 1px; background: #a0a0a0; flex: none; }
    .info .rule { margin-right: 21px; }
    .detail { display: flex; justify-content: space-between; padding: 6px 3px 0 9px; align-items: flex-start; }
    .form { display: grid; grid-template-columns: auto 118px; gap: 4px 3px; align-items: center; text-align: right; padding-top: 2px; }
    .chip { box-sizing: border-box; border: 1px solid #999; background: #f0f0f0; padding: 3px 0 4px; }
    .big { padding: 5px 0; }
    .chip svg { border-bottom: 1px solid #8d98b0; box-sizing: border-box; }
    .field { width: 100%; height: 23px; box-sizing: border-box; border: 1px solid #fff; border-top: 2px solid #707070; border-left: 2px solid #707070; background: #fff; font: inherit; color: #111; padding: 0 2px; margin: 0; border-radius: 0; appearance: none; min-width: 0; }
    .field.flat { background: #f0f0f0; }
    .field::placeholder { color: #888; }
    .pick { display: grid; grid-template-columns: 1fr 20px; align-items: center; flex: 1; min-width: 0; }
    .pick select { grid-area: 1 / 1 / 2 / 3; }
    .pick i { grid-area: 1 / 2; pointer-events: none; height: 19px; margin-right: 1px; border: 1px solid #fff; border-right: 2px solid #777; border-bottom: 2px solid #777; background: #f0f0f0; box-sizing: border-box; display: grid; place-items: center; }
    .mat { display: flex; height: 93px; box-sizing: border-box; padding: 3px 3px 0 2px; flex: none; align-items: flex-start; }
    .mat .field { width: 160px; margin-left: 4px; }
    .side { margin-left: auto; display: flex; flex-direction: column; align-items: center; gap: 8px; padding-top: 4px; }
    .tabs { display: flex; height: 35px; flex: none; align-items: flex-end; box-sizing: border-box; padding: 0 5px 4px 0; }
    .tab { height: 20px; width: 46px; padding-right: 10px; border-top: 1px solid #fff; border-right: 2px solid #707070; box-sizing: border-box; line-height: 18px; }
    .tab.on { height: 22px; width: 51px; padding-right: 14px; border-left: 1px solid #fff; }
    .drop { margin-left: auto; align-self: flex-start; padding-top: 5px; }
    .nav { display: flex; align-items: center; height: 31px; flex: none; box-sizing: border-box; padding: 0 5px 6px 9px; gap: 11px; border-bottom: 1px solid #a0a0a0; }
    .nav .pick { margin: 6px -2px 0 -5px; }
    .nav .field { height: 26px; }
    .nav .pick i { height: 22px; }
    .list { display: flex; background: #fff; min-height: 0; overflow: hidden; }
    .list.colors { flex: 1 1 0; }
    .list.folders { height: 34px; flex: none; }
    .cells { flex: 1; display: grid; grid-template-columns: repeat(3, 62px); grid-auto-rows: 62px; gap: 2px; padding: 2px 0 0 3px; }
    .cell { border: 1px solid #999; background: #fff; padding: 1px; display: grid; }
    .cell span { display: block; }
    .cell svg { margin: 10px auto; }
    .list .scroll { margin-right: 1px; }
    .strip { margin-top: 3px; border-top: 2px solid #6e6e6e; padding-top: 4px; flex: none; }
    .strip p { margin: 0; height: 23px; box-sizing: border-box; border: 1px solid #a0a0a0; border-width: 1px 0; background: #e4e4e4; padding: 0 5px; line-height: 20px; }
    .nav.low { height: 36px; }
    .low .pick::before { content: ""; grid-area: 1 / 1; align-self: end; height: 1px; background: #000; margin: 0 3px 3px 5px; z-index: 1; }
  `;
  private chev(up: boolean) {
    return html`<svg width="10" height="7" viewBox="0 0 10 7"><path d=${up ? "M1 6l4-4 4 4" : "M1 1l4 4 4-4"} fill="none" stroke="#555" stroke-width="2.200"/></svg>`;
  }
  private scroll() {
    return html`<div class="scroll"><button aria-label="위로">${this.chev(true)}</button><div class="thumb"></div><button aria-label="아래로">${this.chev(false)}</button></div>`;
  }
  private half(w: number, h: number) {
    return html`<svg width=${w} height=${h} viewBox="0 0 10 10" preserveAspectRatio="none"><path d="M0 0h10v10z" fill="#fff"/><path d="M0 0v10h10z" fill="#a5b2bc"/></svg>`;
  }
  private head(t: string) {
    return html`<div class="head"><svg width="10" height="9" viewBox="0 0 10 9"><path d="M0 0h10L5 9z"/></svg><span>${t}</span>
      <button class="x" aria-label="${t} 닫기"><svg width="8" height="8" viewBox="0 0 8 8"><path d="M1 1l6 6M7 1L1 7" stroke="#111" stroke-width="1.600"/></svg></button></div>`;
  }
  private pick(id: string, value: string) {
    return html`<div class="pick"><select class="field" id=${id} aria-label=${value}><option>${value}</option></select><i><svg width="9" height="5" viewBox="0 0 9 5"><path d="M0 0h9L4.500 5z"/></svg></i></div>`;
  }
  private nav(value: string, low = false) {
    return html`<div class=${classMap({ nav: true, low })}>
      <button aria-label="뒤로"><svg width="16" height="16" viewBox="0 0 16 16"><path d="M1 8l7-6v3.500h6v5H8V14z" fill="#f6f6f6" stroke="#999" stroke-width="1.300"/></svg></button>
      <button aria-label="앞으로"><svg width="16" height="16" viewBox="0 0 16 16"><path d="M15 8L8 2v3.500H2v5h6V14z" fill="#f6f6f6" stroke="#999" stroke-width="1.300"/></svg></button>
      <button aria-label="모델 내"><svg width="21" height="20" viewBox="0 0 21 20">${icons.home}</svg></button>
      ${this.pick(low ? "lib2" : "lib1", value)}
      <button aria-label="세부 정보"><svg width="17" height="18" viewBox="0 0 17 18"><path d="M7 0l10 9-10 9z"/><path d="M1 4h8v11H1z" fill="#fff" stroke="#222"/><path d="M1 4h8v4H1z" fill="#4d86c8"/><path d="M3 10h5M3 12h5" stroke="#555"/></svg></button></div>`;
  }
  render() {
    return html`
      <div class="title"><span>기본 트레이</span>
        <button aria-label="고정"><svg width="8" height="12" viewBox="0 0 8 12"><path d="M2 1h4v6H2zM0 7h8M4 7v5M5 1v6" fill="none" stroke="#111" stroke-width="1.200"/></svg></button>
        <button class="close" aria-label="닫기"><svg width="8" height="8" viewBox="0 0 8 8"><path d="M1 1l6 6M7 1L1 7" stroke="#fff" stroke-width="1.800"/></svg></button></div>
      <div class="body"><div class="panels">
        ${this.head("요소 정보")}
        <div class="info">
          <div class="kind"><b>원</b><button aria-label="세부 정보 표시"><svg width="12" height="18" viewBox="0 0 12 18"><path d="M.5.5h11v17H.5z" fill="#fff" stroke="#555"/><path d="M2 2h8L6 7zM0 8h12v10H0z"/><path d="M6 10v6M3 13h6" stroke="#fff" stroke-width="1.600"/></svg></button></div>
          <div class="rule"></div>
          <div class="detail"><div class="chip">${this.half(51, 51)}</div>
            <div class="form">
              <label for="layer">레이어(<u>L</u>):</label>${this.pick("layer", "Layer0")}
              <label for="radius">반경:</label><input class="field" id="radius" value="~ 100mm">
              <label for="seg">조각:</label><input class="field flat" id="seg" value="24" readonly>
            </div></div>
        </div>
        ${this.head("재질")}
        <div class="mat"><div class="chip big">${this.half(75, 75)}</div><input class="field flat" aria-label="재질 이름" placeholder="기본값" disabled>
          <div class="side">
            <button aria-label="보조 창 숨기기"><svg width="12" height="18" viewBox="0 0 12 18"><path d="M.5.5h11v17H.5z" fill="#fff" stroke="#555"/><path d="M0 0h12v10H0zM2 16h8l-4-5z"/><path d="M3 5h6" stroke="#fff" stroke-width="1.800"/></svg></button>
            <button aria-label="재질 만들기"><svg width="22" height="22" viewBox="0 0 22 22"><path d="M3 6l9-5 9 3v10l-8 6-10-4z" fill="#1b1b18"/><path d="M5 6l8-4 2 1-8 4zM10 8l8-4 2 1-8 4z" fill="#d9d6a8"/><path d="M14 12l6-4M14 16l6-4" stroke="#8a886a" stroke-width="1.500"/><circle cx="7" cy="15" r="5.500" fill="#fff" stroke="#111"/><path d="M7 12v6M4 15h6" stroke="#111" stroke-width="1.300"/></svg></button>
            ${this.half(26, 26)}
          </div></div>
        <div class="rule"></div>
        <div class="tabs"><button class="tab on">선택</button><button class="tab">편집</button>
          <button class="drop" aria-label="샘플 페인트"><svg width="22" height="22" viewBox="0 0 22 22"><path d="M2 20l2-5 9-9 3 3-9 9z" fill="#cdb487" stroke="#333"/><path d="M2 20l2-5 4-4 3 3-4 4z" fill="#e5ad3a"/><path d="M11 5l6 6M13 7l3-4c2-3 6 0 4 3l-4 3z" fill="#2e2a2e" stroke="#2e2a2e" stroke-width="2"/></svg></button></div>
        ${this.nav("색상")}
        <div class="list colors"><div class="cells">${SWATCHES.map((c) => html`<button class="cell" aria-label=${c}><span style="background:${c}"></span></button>`)}</div>${this.scroll()}</div>
        <div class="strip"><p>선택</p></div>
        ${this.nav("재질", true)}
        <div class="list folders"><div class="cells">${[1, 2, 3].map((n) => html`<button class="cell" aria-label="폴더 ${n}"><svg width="38" height="40" viewBox="0 0 38 40"><path d="M2 6l9-2 2 3 14-2v33H6z" fill="#8fb8d6" stroke="#3f6f94"/><path d="M7 12l29-9-4 35H8z" fill="#b1936a" stroke="#555"/></svg></button>`)}</div>
          <div class="scroll"><button aria-label="위로">${this.chev(true)}</button><div class="thumb"></div></div></div>
      </div>
      ${this.scroll()}</div>`;
  }
}

@customElement("app-root")
class AppRoot extends LitElement {
  @property({ type: Array }) menus = ["파일(F)", "편집(E)", "보기(V)", "카메라(C)", "그리기(R)", "도구(T)", "창(W)", "도움말(H)"];
  static styles = css`
    :host { display: flex; flex-direction: column; height: 100vh; box-sizing: border-box; padding: 40px 0 42px; background: #fff; color: #111; font: 16px/24px "Noto Sans CJK KR", sans-serif; overflow: hidden; }
    .menu { display: flex; gap: 13px; padding: 0 7px; height: 24px; flex: none; }
    .menu button { border: 0; background: none; padding: 1px 0 0; font: inherit; color: inherit; }
    top-toolbar { flex: none; }
    .main { flex: 1; min-height: 0; display: flex; background: #f0f0f0; position: relative; }
    .shade { position: absolute; left: 0; bottom: 2px; width: 1310px; height: 71px; background: rgba(0, 0, 0, 0.43); pointer-events: none; }
    .status { display: flex; align-items: center; height: 28px; flex: none; background: #f0f0f0; padding: 0 5px 0 6px; gap: 17px; }
    .status svg { width: 18px; height: 18px; flex: none; margin-top: 4px; }
    .status p { margin: 0 0 0 -6px; flex: 1; font-size: 17px; line-height: 24px; padding-top: 3px; white-space: nowrap; }
    .bar { width: 1px; height: 14px; background: #777; margin: 4px 0 0 -5px; }
    .unit { display: flex; align-items: center; gap: 9px; margin-left: -7px; }
    .unit span { padding-top: 3px; }
    .unit input { width: 250px; height: 24px; box-sizing: border-box; border: 1px solid #b4c5da; background: #f0f0f0; margin: 3px 0 0; padding: 0 4px; font: inherit; }
  `;
  render() {
    return html`
      <nav class="menu">${this.menus.map((m) => html`<button>${m}</button>`)}</nav>
      <top-toolbar></top-toolbar>
      <div class="main"><side-toolbar></side-toolbar><model-view></model-view><side-tray></side-tray><div class="shade"></div></div>
      <footer class="status">
        <svg viewBox="0 0 18 18" fill="none"><circle cx="9" cy="9" r="8" stroke="#999" stroke-width="1.300"/><path d="M9 15l-3-7a3 3 0 1 1 6 0z" fill="#999"/></svg>
        <svg viewBox="0 0 18 18" fill="none"><circle cx="9" cy="9" r="8" stroke="#111" stroke-width="1.600"/><circle cx="9" cy="4.500" r="1.600" fill="#111"/><path d="M6 7h6v1.500h-1.500V15h-3V8.500H6z" fill="#111"/></svg>
        <svg viewBox="0 0 18 18" fill="none"><circle cx="9" cy="9" r="8" stroke="#999" stroke-width="1.300"/><circle cx="9" cy="6.500" r="3" fill="#999"/><path d="M3 14c1-5 11-5 12 0a8 8 0 0 1-12 0z" fill="#999"/></svg>
        <span class="bar"></span>
        <p>개체를 선택하십시오. 선택을 확대하려면 Shift를 누르십시오. 여러 항목을 선택하려면 마우스를 끄십시오.</p>
        <span class="bar"></span>
        <label class="unit"><span>단위</span><input></label>
      </footer>`;
  }
}
